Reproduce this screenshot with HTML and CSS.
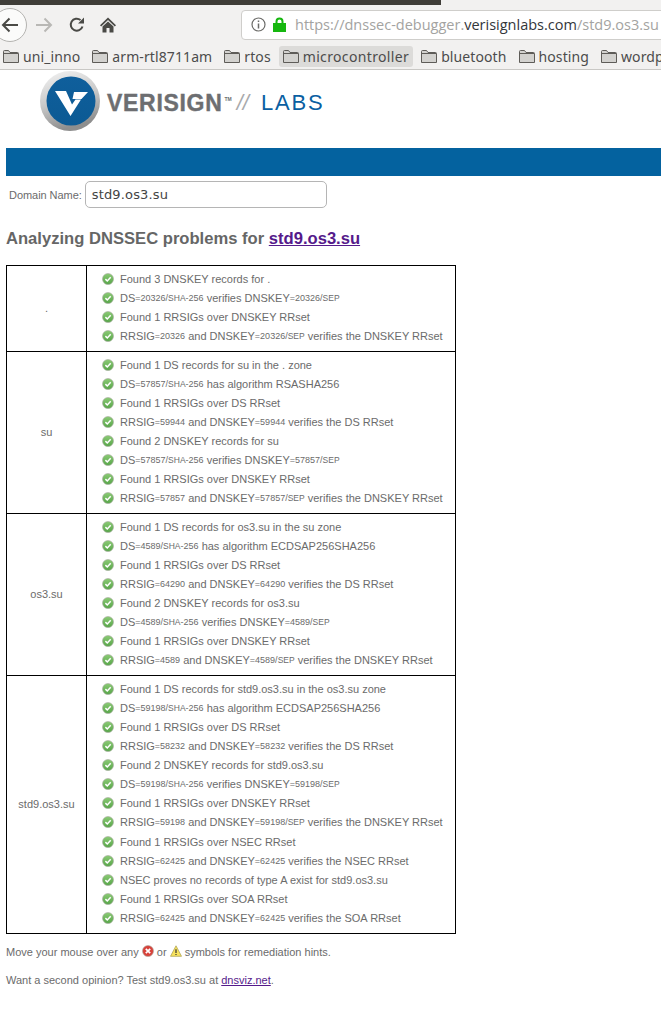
FILE: index.html
```html
<!DOCTYPE html>
<html lang="en">
<head>
  <meta charset="utf-8">
  <meta name="viewport" content="width=device-width">
  <title>DNSSEC Analyzer</title>
  <link rel="stylesheet" href="styles.css">
</head>
<body>
  <svg class="defs" width="0" height="0">
    <defs>
      <linearGradient id="okfill" x1="0" y1="0" x2="0" y2="1">
        <stop offset="0" stop-color="#8ccb76"/>
        <stop offset="1" stop-color="#56a548"/>
      </linearGradient>
      <symbol id="ok" viewBox="0 0 12 12">
        <circle cx="6" cy="6" r="5.5" fill="url(#okfill)" stroke="#a7a99f" stroke-width=".6"/>
        <path d="M3.4 6.1 5.3 8 8.7 4.3" fill="none" stroke="#fff" stroke-width="1.5"/>
      </symbol>
      <symbol id="folder" viewBox="0 0 16 13">
        <path d="M.5 12.5V1.5q0-1 1-1h4l1.5 2h7.5q1 0 1 1v9z" fill="#d3d2cf" stroke="#5e5c58"/>
        <path d="M.5 3.5H15" stroke="#5e5c58" fill="none"/>
      </symbol>
    </defs>
  </svg>

  <div class="titlebar"><div class="titlebar-dark"></div></div>

  <div class="toolbar">
    <div class="back-btn">
      <svg width="18" height="16" viewBox="0 0 18 16"><path d="M17 8H2M8.500 1.500 2 8l6.500 6.500" fill="none" stroke="#4a4a46" stroke-width="2"/></svg>
    </div>
    <svg class="tool forward" width="18" height="16" viewBox="0 0 18 16"><path d="M1 8h15M9.500 1.500 16 8l-6.500 6.500" fill="none" stroke="#b9b8b5" stroke-width="2"/></svg>
    <svg class="tool reload" width="16" height="16" viewBox="0 0 16 16"><path d="M13.500 9.500A6 6 0 1 1 11.500 3" fill="none" stroke="#4a4a46" stroke-width="2"/><path d="M15 .5V6.500H9z" fill="#4a4a46"/></svg>
    <svg class="tool home" width="16" height="16" viewBox="0 0 16 16"><path d="M8 .5 0 8.200l1.200 1.200L8 3l6.800 6.400L16 8.200zM2.500 9.500V15.500H6.500V11H9.500V15.500H13.500V9.500L8 4.500z" fill="#4a4a46"/></svg>
    <div class="urlbar">
      <svg class="info" width="15" height="15" viewBox="0 0 15 15"><circle cx="7.500" cy="7.500" r="6.500" fill="none" stroke="#6b6b68" stroke-width="1.200"/><path d="M7.500 6.500V11.500M7.500 3.500V5" stroke="#6b6b68" stroke-width="1.500"/></svg>
      <svg class="lock" width="13" height="15" viewBox="0 0 13 15"><path d="M3.500 7V4.500a3 3 0 0 1 6 0V7" fill="none" stroke="#16b70f" stroke-width="2"/><rect y="6" width="13" height="9" fill="#16b70f"/></svg>
      <span class="url">https://dnssec-debugger.<b>verisignlabs.com</b>/std9.os3.su</span>
    </div>
  </div>

  <div class="bookmarks">
    <span class="mark"><svg width="16" height="13"><use href="#folder"/></svg>uni_inno</span>
    <span class="mark"><svg width="16" height="13"><use href="#folder"/></svg>arm-rtl8711am</span>
    <span class="mark"><svg width="16" height="13"><use href="#folder"/></svg>rtos</span>
    <span class="mark hover"><svg width="16" height="13"><use href="#folder"/></svg>microcontroller</span>
    <span class="mark"><svg width="16" height="13"><use href="#folder"/></svg>bluetooth</span>
    <span class="mark"><svg width="16" height="13"><use href="#folder"/></svg>hosting</span>
    <span class="mark"><svg width="16" height="13"><use href="#folder"/></svg>wordpress</span>
  </div>

  <div class="page">
    <div class="logo">
      <svg class="logo-mark" width="62" height="62" viewBox="39 69 62 62">
        <defs>
          <linearGradient id="ring" x1="0" y1="0" x2=".3" y2="1">
            <stop offset="0" stop-color="#f4f4f4"/>
            <stop offset=".55" stop-color="#c9c9c9"/>
            <stop offset="1" stop-color="#8e8e8e"/>
          </linearGradient>
          <linearGradient id="ball" x1="0" y1="0" x2="0" y2="1">
            <stop offset="0" stop-color="#0f5f9c"/>
            <stop offset="1" stop-color="#0c5a94"/>
          </linearGradient>
        </defs>
        <circle cx="70" cy="100" r="30" fill="url(#ring)"/>
        <circle cx="71" cy="100" r="24.500" fill="url(#ball)"/>
        <path d="M55 90H66L72 103.500 75.500 98.500H81L70.500 115zM74 91H88L81.500 98H72.500z" fill="#fff"/>
      </svg>
      <span class="logo-name">VERISIGN</span><span class="logo-tm">TM</span>
      <span class="logo-slash">//</span>
      <span class="logo-labs">LABS</span>
    </div>

    <div class="bluebar"></div>

    <form class="domain">
      <label>Domain Name:</label>
      <div class="domain-input">std9.os3.su</div>
    </form>

    <h2>Analyzing DNSSEC problems for <a href="#">std9.os3.su</a></h2>

    <table>
      <tr>
        <td class="zone">.</td>
        <td class="checks">
          <ul>
            <li><svg><use href="#ok"/></svg>Found 3 DNSKEY records for .</li>
            <li><svg><use href="#ok"/></svg>DS<small>=20326/<i>SHA</i>-256</small> verifies DNSKEY<small>=20326/<i>SEP</i></small></li>
            <li><svg><use href="#ok"/></svg>Found 1 RRSIGs over DNSKEY RRset</li>
            <li><svg><use href="#ok"/></svg>RRSIG<small>=20326</small> and DNSKEY<small>=20326/<i>SEP</i></small> verifies the DNSKEY RRset</li>
          </ul>
        </td>
      </tr>
      <tr>
        <td class="zone">su</td>
        <td class="checks">
          <ul>
            <li><svg><use href="#ok"/></svg>Found 1 DS records for su in the . zone</li>
            <li><svg><use href="#ok"/></svg>DS<small>=57857/<i>SHA</i>-256</small> has algorithm RSASHA256</li>
            <li><svg><use href="#ok"/></svg>Found 1 RRSIGs over DS RRset</li>
            <li><svg><use href="#ok"/></svg>RRSIG<small>=59944</small> and DNSKEY<small>=59944</small> verifies the DS RRset</li>
            <li><svg><use href="#ok"/></svg>Found 2 DNSKEY records for su</li>
            <li><svg><use href="#ok"/></svg>DS<small>=57857/<i>SHA</i>-256</small> verifies DNSKEY<small>=57857/<i>SEP</i></small></li>
            <li><svg><use href="#ok"/></svg>Found 1 RRSIGs over DNSKEY RRset</li>
            <li><svg><use href="#ok"/></svg>RRSIG<small>=57857</small> and DNSKEY<small>=57857/<i>SEP</i></small> verifies the DNSKEY RRset</li>
          </ul>
        </td>
      </tr>
      <tr>
        <td class="zone">os3.su</td>
        <td class="checks">
          <ul>
            <li><svg><use href="#ok"/></svg>Found 1 DS records for os3.su in the su zone</li>
            <li><svg><use href="#ok"/></svg>DS<small>=4589/<i>SHA</i>-256</small> has algorithm ECDSAP256SHA256</li>
            <li><svg><use href="#ok"/></svg>Found 1 RRSIGs over DS RRset</li>
            <li><svg><use href="#ok"/></svg>RRSIG<small>=64290</small> and DNSKEY<small>=64290</small> verifies the DS RRset</li>
            <li><svg><use href="#ok"/></svg>Found 2 DNSKEY records for os3.su</li>
            <li><svg><use href="#ok"/></svg>DS<small>=4589/<i>SHA</i>-256</small> verifies DNSKEY<small>=4589/<i>SEP</i></small></li>
            <li><svg><use href="#ok"/></svg>Found 1 RRSIGs over DNSKEY RRset</li>
            <li><svg><use href="#ok"/></svg>RRSIG<small>=4589</small> and DNSKEY<small>=4589/<i>SEP</i></small> verifies the DNSKEY RRset</li>
          </ul>
        </td>
      </tr>
      <tr>
        <td class="zone">std9.os3.su</td>
        <td class="checks">
          <ul>
            <li><svg><use href="#ok"/></svg>Found 1 DS records for std9.os3.su in the os3.su zone</li>
            <li><svg><use href="#ok"/></svg>DS<small>=59198/<i>SHA</i>-256</small> has algorithm ECDSAP256SHA256</li>
            <li><svg><use href="#ok"/></svg>Found 1 RRSIGs over DS RRset</li>
            <li><svg><use href="#ok"/></svg>RRSIG<small>=58232</small> and DNSKEY<small>=58232</small> verifies the DS RRset</li>
            <li><svg><use href="#ok"/></svg>Found 2 DNSKEY records for std9.os3.su</li>
            <li><svg><use href="#ok"/></svg>DS<small>=59198/<i>SHA</i>-256</small> verifies DNSKEY<small>=59198/<i>SEP</i></small></li>
            <li><svg><use href="#ok"/></svg>Found 1 RRSIGs over DNSKEY RRset</li>
            <li class="tall"><svg><use href="#ok"/></svg>RRSIG<small>=59198</small> and DNSKEY<small>=59198/<i>SEP</i></small> verifies the DNSKEY RRset</li>
            <li><svg><use href="#ok"/></svg>Found 1 RRSIGs over NSEC RRset</li>
            <li><svg><use href="#ok"/></svg>RRSIG<small>=62425</small> and DNSKEY<small>=62425</small> verifies the NSEC RRset</li>
            <li><svg><use href="#ok"/></svg>NSEC proves no records of type A exist for std9.os3.su</li>
            <li><svg><use href="#ok"/></svg>Found 1 RRSIGs over SOA RRset</li>
            <li><svg><use href="#ok"/></svg>RRSIG<small>=62425</small> and DNSKEY<small>=62425</small> verifies the SOA RRset</li>
          </ul>
        </td>
      </tr>
    </table>

    <p class="hint">Move your mouse over any
      <svg class="sym" width="12" height="12" viewBox="0 0 12 12"><circle cx="6" cy="6" r="5.500" fill="#d8413a" stroke="#a9a9a0" stroke-width=".6"/><path d="M3.800 3.800 8.200 8.200M8.200 3.800 3.800 8.200" stroke="#fff" stroke-width="1.700"/></svg>
      or
      <svg class="sym" width="12" height="12" viewBox="0 0 12 12"><path d="M6 .8 11.500 11.300H.5z" fill="#f7e25c" stroke="#b3a75a" stroke-width=".8"/><path d="M6 4.300V8M6 8.900V10" stroke="#333" stroke-width="1.200"/></svg>
      symbols for remediation hints.</p>
    <p class="hint second">Want a second opinion? Test std9.os3.su at <a href="#">dnsviz.net</a>.</p>
  </div>
</body>
</html>
```

FILE: styles.css
```css
* {
  box-sizing: border-box;
}

body {
  margin: 0;
  background-color: #ffffff;
  color: #6b6b6b;
  font-family: "Liberation Sans", Arial, sans-serif;
  overflow: hidden;
}

a {
  color: #551a8b;
}

.defs {
  display: block;
  height: 0;
}

/* browser chrome */
.titlebar {
  height: 5px;
  background-color: #f2f1f0;
}

.titlebar-dark {
  width: 441px;
  height: 5px;
  background-color: #3f3d38;
}

.toolbar {
  display: flex;
  align-items: center;
  height: 40px;
  padding-bottom: 1px;
  background-color: #f2f1f0;
  font-family: "Open Sans", sans-serif;
}

.back-btn {
  display: flex;
  align-items: center;
  justify-content: center;
  flex: none;
  width: 34px;
  height: 34px;
  margin-left: -7px;
  border: 1px solid #b4b3b0;
  border-radius: 50%;
  background-color: #fbfbfa;
}

.tool {
  flex: none;
}

.forward {
  margin-left: 8px;
}

.reload {
  margin-left: 16px;
}

.home {
  margin-left: 15px;
}

.urlbar {
  display: flex;
  align-items: center;
  flex: none;
  width: 425px;
  height: 30px;
  margin-left: 125px;
  padding-left: 9px;
  border: 1px solid #cfcecb;
  border-radius: 4px 0 0 4px;
  background-color: #ffffff;
  white-space: nowrap;
  overflow: hidden;
}

.lock {
  margin-left: 7px;
}

.url {
  margin-left: 9px;
  color: #a3a3a1;
  font-size: 14.500px;
}

.url b {
  color: #33363a;
  font-weight: normal;
}

.bookmarks {
  display: flex;
  gap: 4px;
  height: 24px;
  margin-left: -1px;
  padding-top: 1px;
  background-color: #f2f1f0;
  font-family: "Noto Sans", sans-serif;
  font-size: 14px;
  letter-spacing: .1px;
  color: #4c4c4c;
  white-space: nowrap;
  overflow: hidden;
}

.mark {
  display: flex;
  align-items: center;
  gap: 4px;
  flex: none;
  height: 21px;
  padding: 0 4px;
  border-radius: 3px;
}

.mark.hover {
  background-color: #dcdbd9;
  letter-spacing: .35px;
}

/* page */
.page {
  border-top: 1px solid #c9c8c5;
  padding: 0 0 0 6px;
}

.logo {
  display: flex;
  align-items: center;
  height: 78px;
  margin-left: 33px;
  padding-bottom: 16px;
}

.logo-mark {
  flex: none;
}

.logo-name {
  margin: 4px 0 0 6px;
  font-size: 23px;
  font-weight: bold;
  letter-spacing: .7px;
  color: #6d6e71;
  -webkit-text-stroke: .4px #6d6e71;
}

.logo-tm {
  align-self: flex-start;
  margin: 26px 0 0 2px;
  font-size: 5px;
  font-weight: bold;
  color: #6d6e71;
}

.logo-slash {
  margin: 4px 0 0 5px;
  font-size: 22px;
  font-style: italic;
  color: #a9aaac;
}

.logo-labs {
  margin: 4px 0 0 12px;
  font-size: 22px;
  letter-spacing: 1.800px;
  color: #0a5fa2;
}

.bluebar {
  height: 28px;
  background-color: #04629f;
}

.domain {
  display: flex;
  align-items: center;
  gap: 3px;
  height: 27px;
  margin: 5px 0 0 3px;
  font-size: 11px;
  letter-spacing: -.05px;
}

.domain-input {
  display: flex;
  align-items: center;
  width: 242px;
  height: 27px;
  padding: 0 0 1px 6px;
  border: 1px solid #b5b5b5;
  border-radius: 5px;
  font-family: "DejaVu Sans", sans-serif;
  font-size: 13px;
  letter-spacing: .15px;
  color: #444444;
}

h2 {
  margin: 21px 0 17px;
  font-size: 16.600px;
  line-height: 19px;
  color: #666666;
}

table {
  width: 450px;
  border-collapse: collapse;
  font-size: 11px;
}

td {
  border: 1px solid #000000;
  padding: 0;
}

.zone {
  width: 80px;
  padding-bottom: 2px;
  text-align: center;
}

ul {
  margin: 0;
  padding: 3px 0 6px 15px;
  list-style: none;
}

li {
  display: flex;
  align-items: center;
  height: 19px;
  white-space: pre-wrap;
}

li.tall {
  height: 20px;
}

li svg {
  flex: none;
  width: 12px;
  height: 12px;
  margin-right: 6px;
}

small {
  font-size: 9px;
}

small i {
  font-size: 8.500px;
  font-style: normal;
}

.hint {
  margin: 11px 0 0;
  font-size: 11px;
  line-height: 15px;
}

.hint.second {
  margin-top: 13px;
}

.sym {
  vertical-align: -1px;
}
```
